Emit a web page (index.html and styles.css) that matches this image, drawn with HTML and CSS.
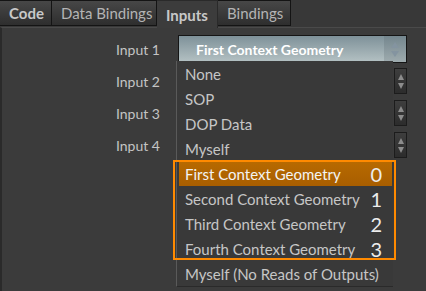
FILE: index.html
```html
<!DOCTYPE html>
<html lang="en">
<head>
  <meta charset="UTF-8" />
  <title>Inputs</title>
  <link rel="stylesheet" href="styles.css">
</head>
<body>
  <nav class="tabs">
    <div class="tab bold">Code</div>
    <div class="tab">Data Bindings</div>
    <div class="tab active bold">Inputs</div>
    <div class="tab">Bindings</div>
  </nav>

  <main class="panel">
    <div class="row">
      <label>Input 1</label>
      <div class="menu-button">
        <span>First Context Geometry</span>
        <span class="arrows"><i class="up"></i><i class="down"></i></span>
      </div>
    </div>
    <div class="row">
      <label>Input 2</label>
      <div class="field"><span class="spin"><i class="up"></i><i class="down"></i></span></div>
    </div>
    <div class="row">
      <label>Input 3</label>
      <div class="field"><span class="spin"><i class="up"></i><i class="down"></i></span></div>
    </div>
    <div class="row">
      <label>Input 4</label>
      <div class="field"><span class="spin"><i class="up"></i><i class="down"></i></span></div>
    </div>

    <!-- open menu -->
    <ul class="popup">
      <li>None</li>
      <li>SOP</li>
      <li>DOP Data</li>
      <li>Myself</li>
      <li class="selected">First Context Geometry <b>0</b></li>
      <li>Second Context Geometry <b>1</b></li>
      <li>Third Context Geometry <b>2</b></li>
      <li>Fourth Context Geometry <b>3</b></li>
      <li>Myself (No Reads of Outputs)</li>
    </ul>
    <div class="highlight-box"></div>
  </main>
</body>
</html>
```

FILE: styles.css
```css
body {
  margin: 0;
  background-color: #3a3a3a;
  color: #c6c6c6;
  font-family: 'Lato', 'Noto Sans', sans-serif;
  font-size: 13px;
  overflow: hidden;
}

.tabs {
  display: flex;
  height: 27px;
  background-color: #383838;
}

.tab {
  box-sizing: border-box;
  height: 26px;
  padding: 0 9px;
  display: flex;
  align-items: center;
  white-space: nowrap;
  border: 1px solid #141414;
  border-left: none;
  background: linear-gradient(#474747, #2e2e2e);
  color: #b4b4b4;
  font-size: 15px;
}

.tab:first-child {
  width: 52px;
}

.tab:nth-child(2) {
  width: 105px;
}

.tab:nth-child(3) {
  width: 61px;
}

.tab:nth-child(4) {
  width: 73px;
}

.tab.bold {
  font-weight: 700;
  color: #c8c8c8;
}

.tab.active {
  background: #3c3c3c;
  border-color: #2a2a2a;
  border-bottom: none;
  height: 28px;
  position: relative;
  z-index: 1;
}

.panel {
  position: relative;
  height: 264px;
  border-top: 1px solid #4a4a4a;
  border-left: 2px solid #2a2a2a;
  background-color: #3b3b3b;
  padding-top: 5px;
  box-sizing: border-box;
}

.row {
  display: flex;
  align-items: center;
  height: 32px;
}

.row label {
  width: 158px;
  text-align: right;
  padding-right: 18px;
  font-size: 14px;
  color: #c4c4c4;
}

.menu-button {
  box-sizing: border-box;
  width: 229px;
  height: 28px;
  display: flex;
  align-items: center;
  justify-content: space-between;
  border: 1px solid #151515;
  background: linear-gradient(#7e9199, #b4c1c3);
  color: #ffffff;
  font-weight: 700;
  font-size: 14px;
  padding-left: 17px;
}

.menu-button .arrows {
  width: 22px;
  height: 100%;
  display: flex;
  flex-direction: column;
  align-items: center;
  justify-content: center;
  gap: 3px;
  background: linear-gradient(#74868e, #9eabae);
}

.arrows i,
.spin i {
  width: 0;
  height: 0;
  border-left: 4px solid transparent;
  border-right: 4px solid transparent;
}

.arrows .up {
  border-bottom: 6px solid #8494a0;
}

.arrows .down {
  border-top: 6px solid #8494a0;
}

.field {
  width: 229px;
  height: 26px;
  display: flex;
  justify-content: flex-end;
}

.spin {
  box-sizing: border-box;
  width: 13px;
  height: 26px;
  display: flex;
  flex-direction: column;
  align-items: center;
  justify-content: center;
  gap: 3px;
  border: 1px solid #1c1c1c;
  background: linear-gradient(#3e3e3e, #2c2c2c);
}

.spin i {
  border-left-width: 3.5px;
  border-right-width: 3.5px;
}

.spin .up {
  border-bottom: 6px solid #8c8c8c;
}

.spin .down {
  border-top: 6px solid #8c8c8c;
}

/* open menu */
.popup {
  position: absolute;
  left: 174px;
  top: 33px;
  width: 216px;
  margin: 0;
  padding: 0;
  list-style: none;
  background-color: #393939;
  border-left: 1px solid #5a5a5a;
  border-bottom: 1px solid #2a2a2a;
  z-index: 2;
}

.popup li {
  height: 25px;
  display: flex;
  align-items: center;
  justify-content: space-between;
  padding: 0 11px 0 8px;
  font-size: 15px;
  white-space: nowrap;
  color: #c6c6c6;
}

.popup li b {
  font-weight: 400;
  font-size: 20px;
  color: #ececec;
}

.popup li.selected {
  margin: 0 1px 0 2px;
  padding-left: 6px;
  padding-right: 10px;
  background: linear-gradient(#b86a00, #a85e00);
  color: #f4f4f4;
}

.highlight-box {
  position: absolute;
  left: 171px;
  top: 132px;
  width: 219px;
  height: 96px;
  border: 2px solid #ff8a00;
  z-index: 3;
}
```
